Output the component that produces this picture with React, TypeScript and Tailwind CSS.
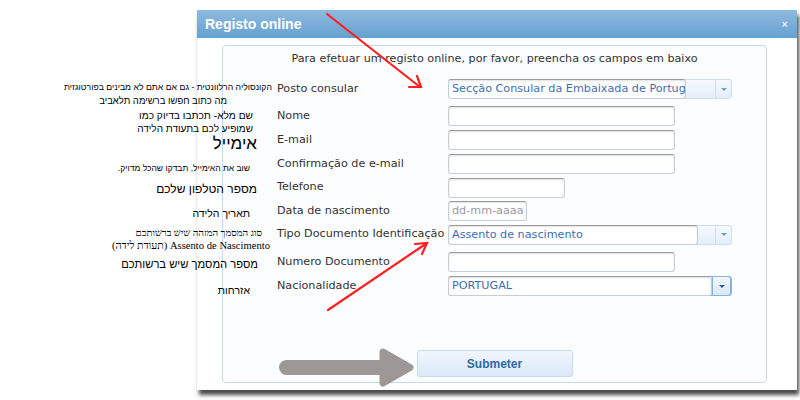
import type { ReactNode } from "react";

const ui = "font-['DejaVu_Sans','Verdana',sans-serif]";
const heb = "font-['Liberation_Sans','DejaVu_Sans',sans-serif]";
const hebSerif = "font-['Liberation_Serif','DejaVu_Serif',serif]";

function Row({
	label,
	className,
	children,
}: {
	label: string;
	className: string;
	children: ReactNode;
}) {
	return (
		<div className={`flex items-center ${className}`}>
			<div className="w-[171px] shrink-0 whitespace-nowrap text-[#333]">{label}</div>
			{children}
		</div>
	);
}

function TextBox({ className, placeholder }: { className: string; placeholder?: string }) {
	return (
		<div
			className={`h-[20px] overflow-hidden whitespace-nowrap rounded-[3px] border border-[#c4ced9] border-t-[#9a9a9a] bg-white pl-[3px] leading-[18px] text-[#9a9a9a] shadow-[inset_0_1px_2px_rgba(0,0,0,0.12)] ${className}`}
		>
			{placeholder}
		</div>
	);
}

function Arrow({ dark }: { dark?: boolean }) {
	return (
		<span
			className={`h-0 w-0 border-x-[3px] border-t-[3px] border-x-transparent ${dark ? "border-t-[#1f5c9a]" : "border-t-[#6f9bc8]"}`}
		/>
	);
}

function Select({
	value,
	boxClass,
	active,
}: {
	value: string;
	boxClass: string;
	active?: boolean;
}) {
	return (
		<div
			className={`flex h-[20px] w-[284px] rounded-[3px] border bg-linear-to-b from-[#f6f9fd] to-[#e3eef9] ${active ? "border-[#86b2dc]" : "border-[#cddff0]"}`}
		>
			<div
				className={`-my-px -ml-px h-[20px] shrink-0 overflow-hidden whitespace-nowrap rounded-[3px] border border-[#c4ced9] border-t-[#9a9a9a] bg-white pl-[3px] leading-[18px] text-[#3b6fb3] shadow-[inset_0_1px_2px_rgba(0,0,0,0.12)] ${boxClass}`}
			>
				{value}
			</div>
			{active ? (
				<div className="-my-px flex flex-1 items-center justify-center rounded-r-[3px] border border-[#86b2dc] bg-linear-to-b from-[#f2f7fd] to-[#d9e8f7]">
					<Arrow dark />
				</div>
			) : (
				<>
					<div className="flex-1" />
					<div className="w-px bg-[#cddff0]" />
					<div className="flex w-[15px] items-center justify-center">
						<Arrow />
					</div>
				</>
			)}
		</div>
	);
}

function Note({ className, children }: { className: string; children: ReactNode }) {
	return (
		<div dir="rtl" className={`absolute whitespace-nowrap text-right text-black ${className}`}>
			{children}
		</div>
	);
}

export default function App() {
	return (
		<div className="relative h-[400px] w-[800px] overflow-hidden bg-white pt-[10px]">
			<div className="ml-[197px] flex h-[380px] w-[600px] flex-col bg-white shadow-[2px_5px_4px_rgba(0,0,0,0.7)]">
				<div className="flex h-[28px] items-center justify-between bg-linear-to-b from-[#8fbadf] to-[#65a1d0] pl-[8px] pr-[9px]">
					<span className="font-['Liberation_Sans',sans-serif] text-[14px] font-bold text-white">
						Registo online
					</span>
					<span className="font-['Liberation_Sans',sans-serif] text-[11px] font-bold text-[#e4edf6]">
						×
					</span>
				</div>

				<div className="flex-1 pb-[7px] pl-[25px] pr-[30px] pt-[7px]">
					<div className={`flex h-full flex-col rounded-[4px] border border-[#c6daee] bg-[#fcfdfe] text-[11.2px] ${ui}`}>
						<p className="mt-[5px] h-[16px] text-center leading-[16px] text-[#333]">
							Para efetuar um registo online, por favor, preencha os campos em baixo
						</p>

						<div className="ml-[54px] mt-[10px] flex flex-col">
							<Row label="Posto consular" className="h-[24px]">
								<Select value="Secção Consular da Embaixada de Portugal" boxClass="w-[238px]" />
							</Row>
							<Row label="Nome" className="mt-[3px] h-[24px]">
								<TextBox className="w-[227px]" />
							</Row>
							<Row label="E-mail" className="h-[24px]">
								<TextBox className="w-[227px]" />
							</Row>
							<Row label="Confirmação de e-mail" className="h-[24px]">
								<TextBox className="w-[227px]" />
							</Row>
							<Row label="Telefone" className="h-[23px]">
								<TextBox className="w-[117px]" />
							</Row>
							<Row label="Data de nascimento" className="h-[24px]">
								<TextBox className="w-[79px]" placeholder="dd-mm-aaaa" />
							</Row>
							<Row label="Tipo Documento Identificação" className="h-[23px]">
								<Select value="Assento de nascimento" boxClass="w-[250px]" />
							</Row>
							<Row label="Numero Documento" className="mt-[4px] h-[24px]">
								<TextBox className="w-[227px]" />
							</Row>
							<Row label="Nacionalidade" className="h-[24px]">
								<Select value="PORTUGAL" boxClass="w-[264px]" active />
							</Row>
						</div>

						<button
							type="button"
							className="mx-auto mt-[52px] h-[27px] w-[156px] rounded-[3px] border border-[#c6daee] bg-linear-to-b from-[#f0f6fd] to-[#dbe9f8] font-['Liberation_Sans',sans-serif] text-[12px] font-bold text-[#2f6aa3]"
						>
							Submeter
						</button>
					</div>
				</div>
			</div>

			{/* Hebrew notes */}
			<Note className={`right-[528px] top-[81px] text-[8.7px] ${heb}`}>
				הקונסוליה הרלוונטית - גם אם אתם לא מבינים בפורטוגזית
			</Note>
			<Note className={`right-[573px] top-[94px] text-[9.5px] ${heb}`}>מה כתוב חפשו ברשימה תלאביב</Note>
			<Note className={`right-[547px] top-[108px] text-[10.2px] ${heb}`}>שם מלא- תכתבו בדיוק כמו</Note>
			<Note className={`right-[547px] top-[121px] text-[10px] ${heb}`}>שמופיע לכם בתעודת הלידה</Note>
			<Note className={`right-[543px] top-[131px] text-[17px] ${heb}`}>אימייל</Note>
			<Note className={`right-[550px] top-[162px] text-[8.5px] ${heb}`}>שוב את האימייל, תבדקו שהכל מדויק.</Note>
			<Note className={`right-[543px] top-[180px] text-[12px] ${heb}`}>מספר הטלפון שלכם</Note>
			<Note className={`right-[550px] top-[206px] text-[10.5px] ${heb}`}>תאריך הלידה</Note>
			<Note className={`right-[538px] top-[226px] text-[9.8px] ${hebSerif}`}>סוג המסמך המזהה שיש ברשותכם</Note>
			<Note className={`right-[530px] top-[238px] text-[10.6px] ${hebSerif}`}>
				Assento de Nascimento (תעודת לידה)
			</Note>
			<Note className={`right-[542px] top-[256px] text-[11.2px] ${heb}`}>מספר המסמך שיש ברשותכם</Note>
			<Note className={`right-[550px] top-[283px] text-[10.5px] ${heb}`}>אזרחות</Note>

			{/* annotation arrows */}
			<svg className="pointer-events-none absolute inset-0" width="800" height="400" viewBox="0 0 800 400">
				<g stroke="#ff1f1f" strokeWidth="2.2" strokeLinecap="round" fill="none">
					<line x1="327" y1="14" x2="420" y2="87" />
					<polyline points="417,76 421,87 409,87" />
					<line x1="328" y1="310" x2="427" y2="243" />
					<polyline points="415,244 427,243 422,254" />
				</g>
				<g fill="#9d9795" stroke="#9d9795" strokeLinejoin="round">
					<rect x="279" y="360" width="110" height="15" rx="7.5" strokeWidth="0" />
					<polygon points="383,352 410,367.5 383,383" strokeWidth="7" />
				</g>
			</svg>
		</div>
	);
}
